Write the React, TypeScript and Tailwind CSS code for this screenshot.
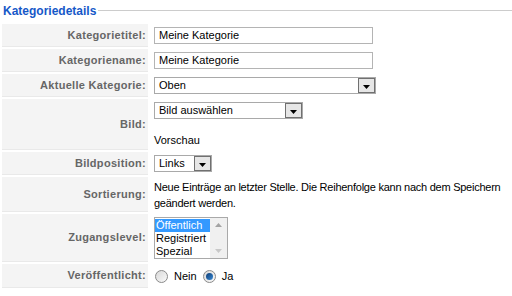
import React from 'react'

const font = { fontFamily: '"Liberation Sans", Arial, sans-serif' }

const Row = ({ label, h, children }: { label: string; h: string; children: React.ReactNode }) => (
  <div className={`flex ${h} overflow-hidden`}>
    <div className="flex w-[146px] shrink-0 items-center justify-end border-b border-[#e9e9e9] bg-[#f4f4f4] pr-[2px] text-[11px] font-bold tracking-[0.3px] text-[#666]">
      {label}
    </div>
    {children}
  </div>
)

const Arrow = () => (
  <div className="flex h-full w-[17px] shrink-0 items-center justify-center border border-[#707070] bg-[#e6e6e6]">
    <svg width="7" height="4" viewBox="0 0 7 4" className="mt-[3px]">
      <path d="M0 0h7L3.5 4z" fill="#000" />
    </svg>
  </div>
)

const Select = ({ value, w }: { value: string; w: string }) => (
  <div className={`flex h-[17px] ${w} items-center border border-[#a9a9a9] bg-white`}>
    <span className="flex-1 pl-[4px] text-[11px] text-black">{value}</span>
    <Arrow />
  </div>
)

const Input = ({ value }: { value: string }) => (
  <div className="flex h-[17px] w-[219px] items-center border border-[#b4b4b4] bg-white pl-[4px] text-[11px] text-black">
    {value}
  </div>
)

const Radio = ({ checked }: { checked?: boolean }) => (
  <span className="flex size-[13px] items-center justify-center rounded-full border border-[#8a8a8a] bg-gradient-to-br from-[#d8d8d8] to-[#fafafa]">
    {checked && <span className="size-[7px] rounded-full bg-gradient-to-br from-[#0d3c74] to-[#3b8bd6]" />}
  </span>
)

export default function App() {
  return (
    <div className="h-[296px] w-[512px] overflow-hidden bg-white pl-[2px]" style={font}>
      <div className="flex h-[21px] items-center">
        <span className="pl-[1px] text-[12px] font-bold text-[#1658c8]">Kategoriedetails</span>
        <div className="ml-[2px] h-px flex-1 bg-[#cccccc]" />
      </div>
      <div className="mt-[3px] flex flex-col gap-[2px]">
        <Row label="Kategorietitel:" h="h-[23px]">
          <div className="flex items-center pl-[6px]"><Input value="Meine Kategorie" /></div>
        </Row>
        <Row label="Kategoriename:" h="h-[23px]">
          <div className="flex items-center pl-[6px]"><Input value="Meine Kategorie" /></div>
        </Row>
        <Row label="Aktuelle Kategorie:" h="h-[23px]">
          <div className="flex items-center pl-[6px]"><Select value="Oben" w="w-[222px]" /></div>
        </Row>
        <Row label="Bild:" h="h-[51px]">
          <div className="flex flex-col pl-[6px] pt-[3px]">
            <Select value="Bild auswählen" w="w-[149px]" />
            <span className="mt-[15px] text-[11px] leading-[13px] text-black">Vorschau</span>
          </div>
        </Row>
        <Row label="Bildposition:" h="h-[23px]">
          <div className="flex items-center pl-[6px]"><Select value="Links" w="w-[58px]" /></div>
        </Row>
        <Row label="Sortierung:" h="h-[35px]">
          <div className="flex flex-col justify-center whitespace-nowrap pl-[6px] text-[11px] leading-[16px] tracking-[-0.25px] text-black">
            <span>Neue Einträge an letzter Stelle. Die Reihenfolge kann nach dem Speichern</span>
            <span>geändert werden.</span>
          </div>
        </Row>
        <Row label="Zugangslevel:" h="h-[48px]">
          <div className="flex items-center pl-[6px]">
            <div className="flex h-[42px] w-[74px] border border-[#a9a9a9] bg-white text-[11px] leading-[13px]">
              <div className="flex flex-1 flex-col pt-px">
                <span className="bg-[#3399ff] pl-px text-white">Öffentlich</span>
                <span className="pl-px text-black">Registriert</span>
                <span className="pl-px text-black">Spezial</span>
              </div>
              <div className="flex w-[17px] flex-col items-center justify-between bg-[#f0f0f0] py-[5px]">
                <svg width="7" height="4" viewBox="0 0 7 4"><path d="M0 4h7L3.5 0z" fill="#a3a3a3" /></svg>
                <svg width="7" height="4" viewBox="0 0 7 4"><path d="M0 0h7L3.5 4z" fill="#c8c8c8" /></svg>
              </div>
            </div>
          </div>
        </Row>
        <Row label="Veröffentlicht:" h="h-[24px]">
          <div className="flex items-center pl-[7px] text-[11px] text-black">
            <Radio />
            <span className="ml-[6px]">Nein</span>
            <span className="ml-[6px]"><Radio checked /></span>
            <span className="ml-[6px]">Ja</span>
          </div>
        </Row>
      </div>
    </div>
  )
}
